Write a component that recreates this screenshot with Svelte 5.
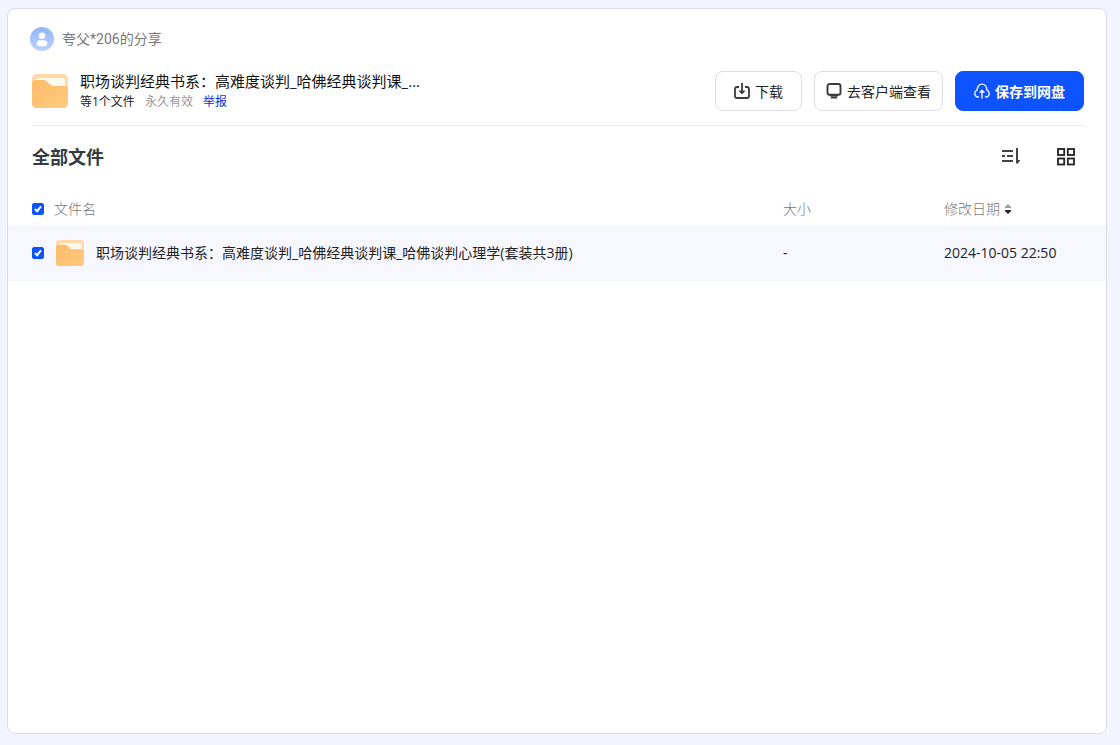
<script lang="ts">
  // Share page: who shared it, download / save actions and the file list.

  interface SharedFile {
    name: string
    size: string
    modified: string
    checked: boolean
  }

  const shareTitle = '职场谈判经典书系：高难度谈判_哈佛经典谈判课_…'

  let files = $state<SharedFile[]>([
    {
      name: '职场谈判经典书系：高难度谈判_哈佛经典谈判课_哈佛谈判心理学(套装共3册)',
      size: '-',
      modified: '2024-10-05 22:50',
      checked: true,
    },
  ])

  const allChecked = $derived(files.every((f) => f.checked))

  function toggleAll() {
    const next = !allChecked
    files.forEach((f) => (f.checked = next))
  }
</script>

{#snippet folder()}
  <svg class="folder" viewBox="0 0 36 34" fill="none" aria-hidden="true">
    <defs>
      <linearGradient id="folder-front" x1="0" y1="0" x2="1" y2="1">
        <stop offset="0" stop-color="#fdba69" />
        <stop offset="1" stop-color="#ffcb80" />
      </linearGradient>
    </defs>
    <rect width="36" height="34" rx="5" fill="#ffd9a6" />
    <rect x="4" y="4" width="29" height="14" rx="3" fill="#fff8ee" />
    <path
      d="M0 10 Q0 6 4 6 H11 Q13.500 6 15.500 8 L17 9.500 Q19.500 12 23 12 H33 Q36 12 36 15 V29 Q36 34 31 34 H5 Q0 34 0 29 Z"
      fill="url(#folder-front)"
    />
  </svg>
{/snippet}

<main class="card">
  <div class="user">
    <svg width="24" height="24" viewBox="0 0 24 24" aria-hidden="true">
      <defs>
        <linearGradient id="avatar" x1="0" y1="0" x2="0" y2="1">
          <stop offset="0" stop-color="#8fb6fb" />
          <stop offset="1" stop-color="#bfd0fc" />
        </linearGradient>
      </defs>
      <circle cx="12" cy="12" r="12" fill="url(#avatar)" />
      <circle cx="12" cy="8.700" r="3.300" fill="#fff" />
      <rect x="6.800" y="13.300" width="10.400" height="6" rx="3" fill="#fff" />
    </svg>
    <span>夸父*206的分享</span>
  </div>

  <header class="share">
    <div class="share-icon">{@render folder()}</div>
    <div class="share-info">
      <h1>{shareTitle}</h1>
      <p>
        <span>等{files.length}个文件</span>
        <span class="valid">永久有效</span>
        <a href="#report">举报</a>
      </p>
    </div>
    <div class="actions">
      <button type="button" class="btn">
        <svg width="16" height="16" viewBox="0 0 16 16" fill="none" stroke="#3a3a3a" stroke-width="1.800" stroke-linejoin="round" aria-hidden="true">
          <path d="M5 4 H3 Q1 4 1 6 V13 Q1 15 3 15 H13 Q15 15 15 13 V6 Q15 4 13 4 H11" />
          <path d="M8 0 V10" />
          <path d="M5.200 8 H10.800 L8 11 Z" fill="#3a3a3a" stroke-width="0.800" />
        </svg>
        下载
      </button>
      <button type="button" class="btn client">
        <svg width="16" height="16" viewBox="0 0 16 16" fill="none" stroke="#3a3a3a" stroke-width="1.900" aria-hidden="true">
          <rect x="1.500" y="1" width="13" height="10.800" rx="2" />
          <path d="M4 12.500 H12 M5 14.600 H11" />
        </svg>
        去客户端查看
      </button>
      <button type="button" class="btn primary">
        <svg width="16" height="16" viewBox="0 0 16 16" fill="none" stroke="#fff" stroke-width="1.300" stroke-linecap="round" stroke-linejoin="round" aria-hidden="true">
          <path d="M4.500 14 C2 14 0.800 12.300 0.800 10.500 C0.800 8.600 2 7.500 3.200 7 C3.200 3.800 5 1.200 8 1.200 C11 1.200 12.800 3.800 12.800 7 C14 7.500 15.200 8.600 15.200 10.500 C15.200 12.300 14 14 11.500 14" />
          <path d="M8 15 V8" />
          <path d="M5.800 9 L8 6.800 L10.200 9 Z" fill="#fff" stroke-width="0.800" />
        </svg>
        保存到网盘
      </button>
    </div>
  </header>

  <div class="toolbar">
    <h2>全部文件</h2>
    <button type="button" class="tool" aria-label="排序">
      <svg width="20" height="18" viewBox="0 0 20 18" fill="none" stroke="#444" stroke-width="1.800" aria-hidden="true">
        <path d="M1 3 H12 M1 8 H4 M6 8 H12 M1 13 H12" />
        <path d="M16 0 V15.500" stroke-width="2" />
        <path d="M16 12 H19 V13 L16 16 Z" fill="#444" stroke="none" />
      </svg>
    </button>
    <button type="button" class="tool" aria-label="网格视图">
      <svg width="18" height="18" viewBox="0 0 18 18" fill="none" stroke="#222" stroke-width="1.800" aria-hidden="true">
        <rect x="1" y="1" width="6.200" height="6" />
        <rect x="10.800" y="1" width="6.200" height="6" />
        <rect x="1" y="10.500" width="6.200" height="6" />
        <rect x="10.800" y="10.500" width="6.200" height="6" />
      </svg>
    </button>
  </div>

  <table>
    <thead>
      <tr>
        <th>
          <label class="all">
            <input type="checkbox" checked={allChecked} onchange={toggleAll} />
            文件名
          </label>
        </th>
        <th class="size">大小</th>
        <th class="date">
          <button type="button" class="sort">
            修改日期
            <svg width="8" height="10" viewBox="0 0 8 10" aria-hidden="true">
              <path d="M4 0 L7 3 V4 H1 V3 Z" fill="#999" />
              <path d="M4 10 L7 7 V6 H1 V7 Z" fill="#222" />
            </svg>
          </button>
        </th>
      </tr>
    </thead>
    <tbody>
      {#each files as file}
        <tr class:selected={file.checked}>
          <td>
            <label class="file">
              <input type="checkbox" bind:checked={file.checked} />
              {@render folder()}
              <span>{file.name}</span>
            </label>
          </td>
          <td>{file.size}</td>
          <td>{file.modified}</td>
        </tr>
      {/each}
    </tbody>
  </table>
</main>

<style>
  :global(body) {
    background: #f2f5ff;
    font-family: "Open Sans", "Noto Sans CJK SC", sans-serif;
    font-size: 14px;
    color: #222;
  }

  .card {
    box-sizing: border-box;
    min-height: calc(100vh - 19px);
    margin: 8px 13px 11px 7px;
    padding-top: 18px;
    background: #fff;
    border: 1px solid #dcdce6;
    border-radius: 8px;
    display: flow-root;
  }

  button {
    font: inherit;
    color: inherit;
    cursor: pointer;
  }

  .user {
    display: flex;
    align-items: center;
    gap: 8px;
    height: 24px;
    padding: 0 22px;
    font-family: Roboto, "Noto Sans CJK SC", sans-serif;
    line-height: 20px;
    color: #777;
  }

  .share {
    display: flex;
    align-items: center;
    margin: 20px 22px 0 24px;
    padding-bottom: 14px;
    border-bottom: 1px solid #ebebef;
  }

  .share-icon {
    display: flex;
    width: 36px;
    margin-right: 12px;
  }

  .folder {
    flex: none;
    width: 100%;
  }

  .share-info {
    flex: 1;
    min-width: 0;
  }

  h1 {
    margin: 0 0 2px;
    font-size: 15px;
    font-weight: 400;
    line-height: 20px;
    color: #111;
  }

  .share-info p {
    display: flex;
    gap: 10px;
    margin: 0;
    font-size: 12px;
    line-height: 18px;
  }

  .valid {
    color: #999;
  }

  .share-info a {
    color: #0a2fe0;
    text-decoration: none;
  }

  .actions {
    display: flex;
    gap: 12px;
  }

  .btn {
    display: flex;
    align-items: center;
    justify-content: center;
    gap: 5px;
    box-sizing: border-box;
    height: 40px;
    padding: 0 18px;
    background: #fff;
    border: 1px solid #dedee2;
    border-radius: 8px;
    white-space: nowrap;
  }

  .client {
    padding: 0 11px;
  }

  .primary {
    background: #0d53ff;
    border-color: #0d53ff;
    color: #fff;
    font-weight: 600;
  }

  .toolbar {
    display: flex;
    align-items: center;
    gap: 36px;
    height: 62px;
    margin-bottom: 5px;
    padding: 0 31px 0 24px;
  }

  h2 {
    flex: 1;
    margin: 0;
    font-size: 18px;
    font-weight: 700;
    line-height: 24px;
    color: #333a40;
  }

  .tool {
    display: flex;
    padding: 0;
    background: none;
    border: 0;
  }

  table {
    width: 100%;
    table-layout: fixed;
    border-collapse: collapse;
  }

  th,
  td {
    padding: 0;
    text-align: left;
    line-height: 20px;
  }

  th {
    height: 32px;
    font-weight: 300;
    color: #777;
  }

  td {
    height: 56px;
  }

  th:first-child,
  td:first-child {
    padding-left: 24px;
  }

  .size {
    width: 161px;
  }

  .date {
    width: 162px;
  }

  .selected {
    background: #f6f7ff;
  }

  .all,
  .file {
    display: flex;
    align-items: center;
    gap: 10px;
  }

  .file {
    gap: 12px;
  }

  .file .folder {
    width: 28px;
  }

  .file span {
    overflow: hidden;
    white-space: nowrap;
    text-overflow: ellipsis;
  }

  input {
    flex: none;
    display: flex;
    justify-content: center;
    appearance: none;
    box-sizing: border-box;
    width: 12px;
    height: 12px;
    margin: 0;
    border: 1px solid #bbb;
    border-radius: 2px;
  }

  input:checked {
    background: #0d53ff;
    border-color: #0d53ff;
  }

  input:checked::after {
    content: "";
    box-sizing: border-box;
    width: 4px;
    height: 7px;
    margin-top: 1px;
    border: solid #fff;
    border-width: 0 2px 2px 0;
    transform: rotate(40deg);
  }

  .sort {
    display: flex;
    align-items: center;
    gap: 4px;
    padding: 0;
    background: none;
    border: 0;
  }
</style>
